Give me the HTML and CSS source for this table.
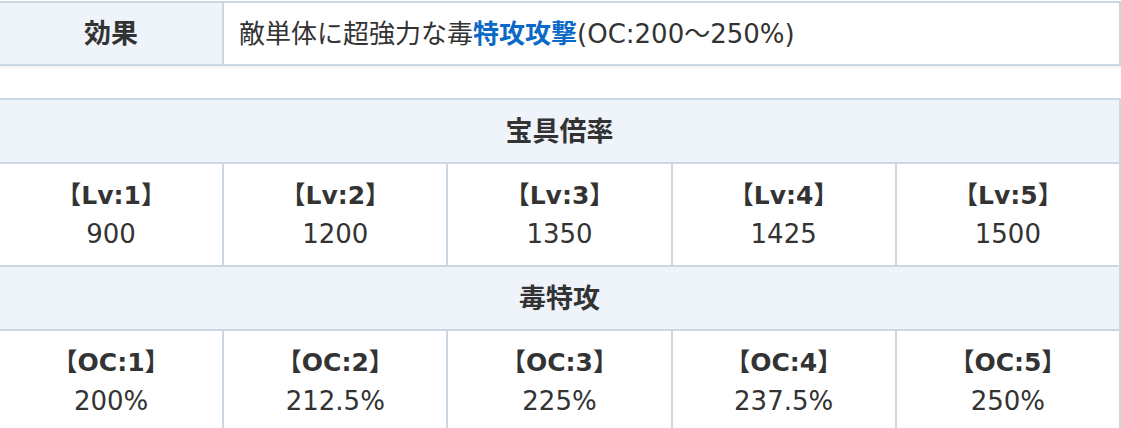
FILE: index.html
```html
<!DOCTYPE html>
<html lang="ja">
<head>
<meta charset="utf-8">
<title>宝具</title>
<link rel="stylesheet" href="styles.css">
</head>
<body>
<div class="page">
  <table class="info">
    <tr>
      <th class="label">効果</th>
      <td class="desc">敵単体に超強力な毒<strong class="hl">特攻攻撃</strong>(OC:200〜250%)</td>
    </tr>
  </table>

  <table class="info grid">
    <tr><th class="head" colspan="5">宝具倍率</th></tr>
    <tr>
      <td><b>【Lv:1】</b><span>900</span></td>
      <td><b>【Lv:2】</b><span>1200</span></td>
      <td><b>【Lv:3】</b><span>1350</span></td>
      <td><b>【Lv:4】</b><span>1425</span></td>
      <td><b>【Lv:5】</b><span>1500</span></td>
    </tr>
    <tr><th class="head" colspan="5">毒特攻</th></tr>
    <tr>
      <td><b>【OC:1】</b><span>200%</span></td>
      <td><b>【OC:2】</b><span>212.5%</span></td>
      <td><b>【OC:3】</b><span>225%</span></td>
      <td><b>【OC:4】</b><span>237.5%</span></td>
      <td><b>【OC:5】</b><span>250%</span></td>
    </tr>
  </table>
</div>
</body>
</html>
```

FILE: styles.css
```css
html, body {
  margin: 0;
  padding: 0;
  background: #ffffff;
}

body {
  font-family: "DejaVu Sans", "Noto Sans CJK JP", sans-serif;
  color: #333333;
  font-size: 26px;
  overflow: hidden;
}

.page {
  padding-top: 1px;
  display: flex;
  flex-direction: column;
  gap: 32px;
}

.info {
  width: 1123px;
  margin-left: -2px;
  border-collapse: separate;
  border-spacing: 2px;
  background: #cbd7e2;
  table-layout: fixed;
  box-shadow: 0 2px 2px rgba(0, 0, 0, 0.05);
}

.info th,
.info td {
  padding: 0;
}

.label {
  width: 222px;
  height: 61px;
  background: #eff3fa;
  font-size: 27px;
  font-weight: bold;
  text-align: center;
  vertical-align: middle;
  padding-bottom: 5px !important;
  box-sizing: border-box;
}

.desc {
  background: #ffffff;
  padding: 0 12px 5px 15px !important;
  text-align: left;
  vertical-align: middle;
  white-space: nowrap;
  font-size: 26px;
}

.hl {
  color: #0b69c7;
  font-weight: bold;
}

.head {
  height: 62px;
  background: #eff3fa;
  font-size: 27px;
  font-weight: bold;
  text-align: center;
  vertical-align: middle;
  padding-bottom: 4px !important;
  box-sizing: border-box;
}

.grid td {
  height: 101px;
  background: #ffffff;
  text-align: center;
  vertical-align: middle;
  line-height: 39px;
}

.grid td b,
.grid td span {
  display: block;
}

.grid td b {
  font-weight: bold;
  font-size: 25px;
}
```
